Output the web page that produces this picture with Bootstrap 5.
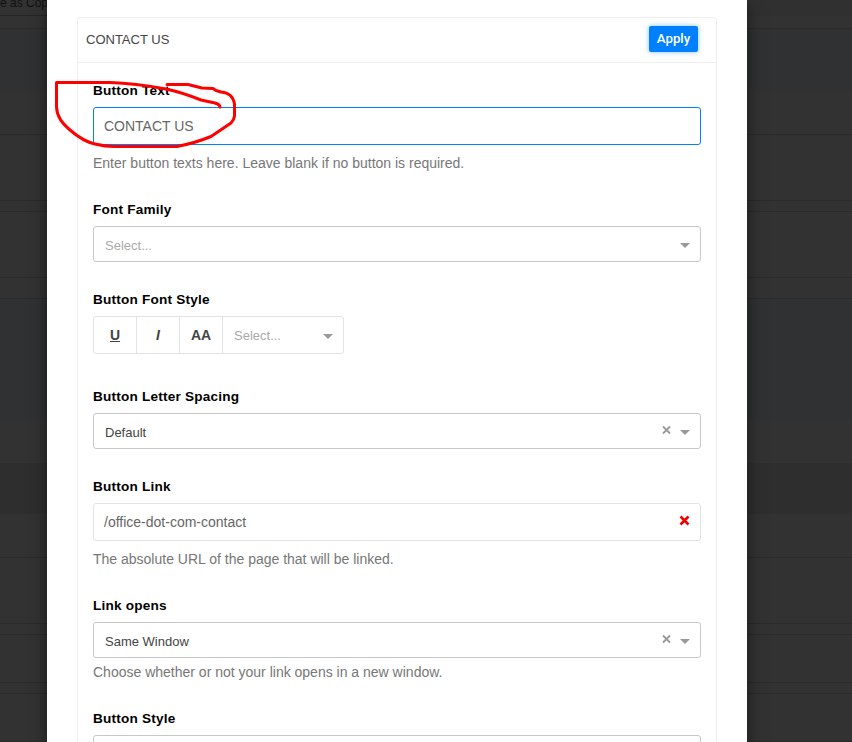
<!DOCTYPE html>
<html lang="en">
<head>
<meta charset="utf-8">
<meta name="viewport" content="width=device-width, initial-scale=1">
<title>Button settings</title>
<link href="https://cdn.jsdelivr.net/npm/bootstrap@5.3.0/dist/css/bootstrap.min.css" rel="stylesheet">
<style>
html,body{height:100%}
body{font:14px/20px "Liberation Sans",Arial,sans-serif;background:#323232;overflow:hidden;color:#444}
.stack{display:grid;grid-template:742px/1fr;height:742px;overflow:hidden}
.stack>*{grid-area:1/1;min-width:0}
/* dimmed page behind the dialog */
.strip{flex:none;border-bottom:1px solid #2b2b2b;background:#323232}
.strip.plain{border:0}
.strip.blue{background:#2f3133}
.strip.dark{background:#2e2e2e}
.s10{height:11px}.s12{height:13px}.s16{height:16px}.s21{height:21px}.s43{height:43px}.s44{height:44px}
.s48{height:48px}.s51{height:51px}.s62{height:62px}.s66{height:66px}.s121{height:121px}
.tools{background:#303030;line-height:7px;font-size:12px;color:#111;white-space:nowrap}
.tools-left{width:60px;border-bottom:1px solid #252525;background:#323232}
.dialog{width:700px;margin-left:47px;padding:17px 30px 0;box-shadow:0 5px 15px rgba(0,0,0,.5);height:742px;overflow:hidden}
.panel{border:1px solid #f0f0f0;border-radius:3px;height:760px}
.panel-top{height:45px;border-bottom:1px solid #f0f0f0;padding:0 18px 2px 8px;color:#444;font-size:13px}
.panel-top span{padding-top:2px}
.apply{height:26px;width:49px;background:#0080ff;color:#fff;border-radius:2px;font:500 13.3px/24px Roboto,sans-serif;padding:0;border:0;box-shadow:0 0 5px rgba(0,128,255,.5)}
.fields{padding:17px 15px 0}
.fields label{display:block;height:20px;line-height:22px;margin-bottom:7px;font-size:13.6px;letter-spacing:.2px;font-weight:700;color:#000}
.box,.pick{border:1px solid #e3e3e3;border-radius:3px;background:#fff}
.box{height:38px;padding:0 10px;color:#666}
.box.active{border-color:#0080ff}
.pick{height:36px;border-color:#c8c8c8;padding:2px 10px 0 11px;color:#444;font-size:13px}
.pick span{padding-top:2px}
.hint{color:#777}
.gap26{margin-bottom:26px}.gap27{margin-bottom:27px}.gap32{margin-bottom:32px}
.mt8{margin-top:8px}.mt4{margin-top:4px}
.ph{color:#aaa!important}
.arrow{border:5px solid transparent;border-top-color:#999;border-bottom:0;width:0;height:0}
.styles{width:251px;height:38px;border:1px solid #e3e3e3;border-radius:3px}
.styles b{width:43px;border-right:1px solid #e3e3e3;color:#444;display:flex;align-items:center;justify-content:center}
.weight{padding:0 10px 0 11px;font-size:13px}
.weight span{padding-top:2px}
.weight .arrow{margin-top:2px}
.sketch{pointer-events:none;z-index:2}
</style>
<script src="https://cdn.jsdelivr.net/npm/bootstrap@5.3.0/dist/js/bootstrap.bundle.min.js"></script>
</head>
<body>
<div class="stack">
  <div class="d-flex flex-column">
    <div class="strip plain tools s16"><div class="tools-left s16">e as Copy</div></div>
    <div class="strip s12"></div>
    <div class="strip blue plain s62"></div>
    <div class="strip s44"></div>
    <div class="strip s66"></div>
    <div class="strip s10"></div>
    <div class="strip s66"></div>
    <div class="strip s21"></div>
    <div class="strip blue plain s121"></div>
    <div class="strip plain s43"></div>
    <div class="strip dark plain s51"></div>
    <div class="strip s44"></div>
    <div class="strip s66"></div>
    <div class="strip s10"></div>
    <div class="strip s48"></div>
    <div class="strip s10"></div>
    <div class="strip s48"></div>
  </div>
  <main class="dialog bg-white">
    <div class="panel">
      <div class="panel-top d-flex align-items-center justify-content-between"><span>CONTACT US</span><button class="btn apply" type="button">Apply</button></div>
      <div class="fields">
        <div class="gap26"><label>Button Text</label>
          <div class="box active d-flex align-items-center">CONTACT US</div>
          <div class="hint mt8">Enter button texts here. Leave blank if no button is required.</div></div>
        <div class="gap27"><label>Font Family</label>
          <div class="pick ph d-flex align-items-center justify-content-between"><span>Select...</span><i class="arrow"></i></div></div>
        <div class="gap32"><label>Button Font Style</label>
          <div class="styles d-flex"><b class="text-decoration-underline">U</b><b class="fst-italic">I</b><b>AA</b>
            <div class="weight d-flex flex-fill align-items-center justify-content-between ph"><span>Select...</span><i class="arrow"></i></div></div></div>
        <div class="gap27"><label>Button Letter Spacing</label>
          <div class="pick d-flex align-items-center"><span class="me-auto">Default</span><svg class="me-2 mb-1" width="10" height="10"><path d="M1 1.5l7 7m0-7l-7 7" stroke="#999" stroke-width="1.8"/></svg><i class="arrow"></i></div></div>
        <div class="gap26"><label>Button Link</label>
          <div class="box d-flex align-items-center justify-content-between">/office-dot-com-contact<svg class="mb-1" width="11" height="11"><path d="M1.5 1.5l8 8m0-8l-8 8" stroke="#f00000" stroke-width="2.6"/></svg></div>
          <div class="hint mt8">The absolute URL of the page that will be linked.</div></div>
        <div class="gap26"><label>Link opens</label>
          <div class="pick d-flex align-items-center"><span class="me-auto">Same Window</span><svg class="me-2 mb-1" width="10" height="10"><path d="M1 1.5l7 7m0-7l-7 7" stroke="#999" stroke-width="1.8"/></svg><i class="arrow"></i></div>
          <div class="hint mt4">Choose whether or not your link opens in a new window.</div></div>
        <div><label>Button Style</label><div class="pick"></div></div>
      </div>
    </div>
  </main>
  <svg class="sketch" width="852" height="742" fill="none" stroke="#f00" stroke-width="3" stroke-linejoin="round" stroke-linecap="round"><path d="M220 107C220 105 218 104 215 103L201 100C191 96 180 92 166 89C150 86 130 83 110 82.500H56.500V107C57 117 62 123 70 130C78 137 86 142 95 144C103 146 108 146.500 114 146.500H177C190 144 200 141 211 136.500L231 123Q234 120 234.500 116V104C233 96 229 93 221 92L216 90.500L213 88.500L202 88L188 84.500H167"/></svg>
</div>
</body>
</html>
